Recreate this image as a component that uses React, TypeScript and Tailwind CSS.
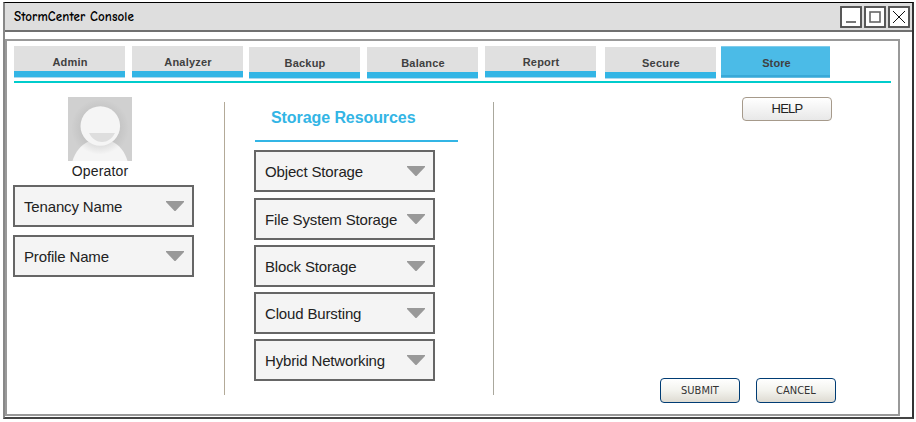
import React from "react";

function Tab({ label, className }: { label: string; className: string }) {
  return (
    <button
      className={`h-[32px] w-[111px] shrink-0 border-b border-[#a9daf0] bg-[#e0e0e0] text-[11px] font-bold tracking-[0.2px] text-[#404040] ${className}`}
    >
      <span className="block h-[31px] border-b-[6px] border-[#33b5e5] pt-[8px] pl-px leading-[16px]">{label}</span>
    </button>
  );
}

function Select({ label, className = "" }: { label: string; className?: string }) {
  return (
    <button
      className={`flex h-[42px] w-[181px] shrink-0 items-center justify-between border-2 border-[#666] bg-[#f4f4f4] pr-[8px] pl-[9px] text-[15px] text-[#222] ${className}`}
    >
      <span className="pt-[2px] leading-[18px] tracking-[-0.15px] whitespace-nowrap">{label}</span>
      <svg width="18" height="10" viewBox="0 0 18 10" className="shrink-0">
        <path d="M0 0H18V1L9.5 10H8.5L0 1Z" fill="#999" />
      </svg>
    </button>
  );
}

function Avatar() {
  return (
    <svg width="64" height="64" viewBox="0 0 64 64" className="shrink-0">
      <defs>
        <radialGradient id="backdrop">
          <stop offset="0.65" stopColor="#c4c4c4" />
          <stop offset="1" stopColor="#d0d0d0" />
        </radialGradient>
        <radialGradient id="shade" gradientUnits="userSpaceOnUse" cx="32" cy="30" r="29">
          <stop offset="0.66" stopColor="#e0e0e0" />
          <stop offset="0.95" stopColor="#f5f5f5" />
        </radialGradient>
      </defs>
      <rect width="64" height="64" fill="#d0d0d0" />
      <circle cx="32" cy="31" r="29" fill="url(#backdrop)" />
      <path d="M4.500 64C7 55 13 48 20.500 44.500H44C51.500 48 57 55 59.500 64Z" fill="url(#shade)" />
      <circle cx="32.3" cy="29" r="19.8" fill="#f5f5f5" />
      <path d="M21 36H47C44 42 39 45 34 45C29 45 24 42 21 36Z" fill="#dedede" />
    </svg>
  );
}

function WindowButton({ children }: { children: React.ReactNode }) {
  return (
    <button className="h-[22px] w-[22px]">
      <svg width="22" height="22" viewBox="0 0 22 22">
        <rect x="1" y="1" width="20" height="20" fill="#fff" stroke="#666" strokeWidth="2" />
        <rect x="1" y="1" width="20" height="20" fill="none" stroke="#333" strokeWidth="0.5" />
        {children}
      </svg>
    </button>
  );
}

export default function App() {
  return (
    <div className="h-[422px] w-[916px] overflow-hidden bg-white pt-[2px] pl-[3px] font-['Liberation_Sans',Arial,sans-serif]">
      <div className="h-[417px] w-[911px] border-t border-r-2 border-b-2 border-l-2 border-t-black border-r-[#333] border-b-[#444] border-l-[#888] bg-white">
        <header className="flex h-[29px] items-start justify-between border-b-2 border-[#707070] bg-[#dedede] pr-[2px] pl-[9px]">
          <h1 className="pt-[5px] font-['Comic_Sans_MS','Comic_Neue','Lato','Open_Sans',sans-serif] text-[13px] leading-[18px] font-black tracking-[0.1px] whitespace-nowrap text-black">
            StormCenter Console
          </h1>
          <div className="flex gap-[2px] pt-[3px]">
            <WindowButton><path d="M6 16H16" stroke="#777" strokeWidth="2" /></WindowButton>
            <WindowButton><rect x="6" y="6" width="10" height="10" fill="none" stroke="#666" strokeWidth="1.6" /></WindowButton>
            <WindowButton><path d="M5 5L17 17M17 5L5 17" stroke="#111" /></WindowButton>
          </div>
        </header>
        <main className="mt-[7px] h-[377px] w-[895px] border-2 border-[#999] bg-white pt-[5px] pl-[7px]">
          <nav className="flex h-[37px] w-[877px] border-b-2 border-[#00cccc]">
            <Tab label="Admin" className="" />
            <Tab label="Analyzer" className="ml-[7px]" />
            <Tab label="Backup" className="mt-px ml-[6px]" />
            <Tab label="Balance" className="mt-px ml-[7px]" />
            <Tab label="Report" className="ml-[7px]" />
            <Tab label="Secure" className="mt-px ml-[9px]" />
            <button className="ml-[5px] h-[32px] w-[109px] border-t border-b border-t-[#80cceb] border-b-[#65bde2] bg-[#4bbbe7] text-[11px] font-bold tracking-[0.1px] text-[#404040]">
              <span className="block h-[30px] border-b-2 border-[#38a9d8] pt-[8px] pl-[2px] leading-[16px]">Store</span>
            </button>
          </nav>
          <div className="flex h-[326px] pt-[14px]">
            <section className="-ml-px flex w-[211px] flex-col">
              <div className="ml-[55px] flex w-[64px] flex-col items-center">
                <Avatar />
                <p className="h-[24px] pt-[2px] text-[14px] leading-[17px] tracking-[0.15px] text-[#222]">Operator</p>
              </div>
              <Select label="Tenancy Name" />
              <Select label="Profile Name" className="mt-[8px]" />
            </section>
            <div className="mt-[5px] h-[293px] w-px bg-[#b3aa98]" />
            <section className="w-[268px] pl-[29px]">
              <h2 className="ml-px h-[45px] w-[203px] border-b-2 border-[#33b5e5] pt-[11px] pl-[16px] text-[16px] leading-[20px] font-bold tracking-[-0.08px] whitespace-nowrap text-[#33b5e5]">
                Storage Resources
              </h2>
              <div className="flex flex-col gap-[5px] pt-[8px]">
                <Select label="Object Storage" className="mb-px" />
                <Select label="File System Storage" />
                <Select label="Block Storage" />
                <Select label="Cloud Bursting" />
                <Select label="Hybrid Networking" />
              </div>
            </section>
            <div className="mt-[5px] h-[293px] w-px bg-[#aaa89d]" />
            <section className="flex w-[342px] flex-col items-end justify-between pb-[6px]">
              <button className="mr-[4px] h-[24px] w-[90px] rounded-[4px] border border-[#a69a8b] bg-gradient-to-b from-white to-[#e8e8e8] text-[13px] leading-[20px] tracking-[-0.8px] text-[#222]">
                HELP
              </button>
              <div className="flex gap-[16px] font-['DejaVu_Sans_Condensed','DejaVu_Sans',Tahoma,sans-serif] text-[11px] text-[#333]">
                <button className="h-[25px] w-[80px] rounded-[4px] border border-[#003c74] bg-gradient-to-b from-white via-[#f3f3ee] to-[#dedbd2] pt-[2px]">
                  SUBMIT
                </button>
                <button className="h-[25px] w-[80px] rounded-[4px] border border-[#003c74] bg-gradient-to-b from-white via-[#f3f3ee] to-[#dedbd2] pt-[2px]">
                  CANCEL
                </button>
              </div>
            </section>
          </div>
        </main>
      </div>
    </div>
  );
}
